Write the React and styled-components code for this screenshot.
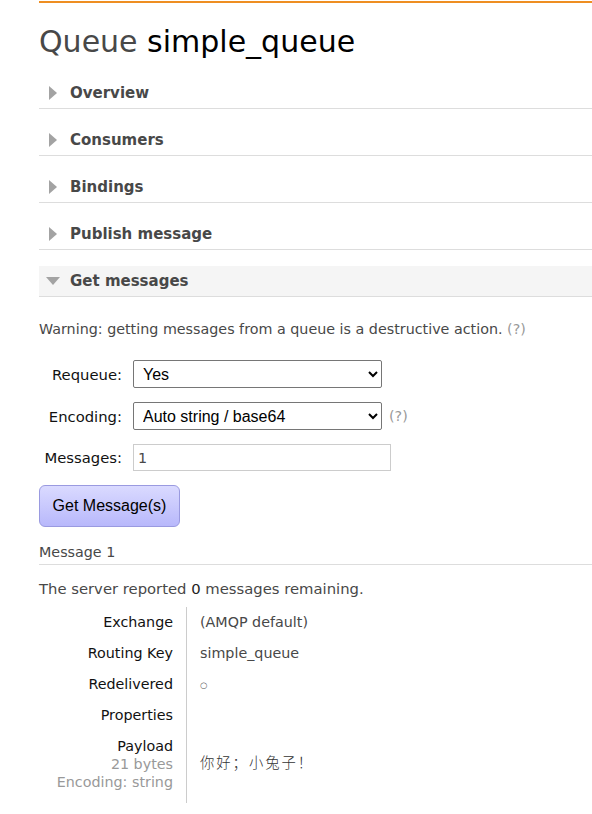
import React from 'react';
import styled, { createGlobalStyle } from 'styled-components';

const GlobalStyle = createGlobalStyle`
    body {
        margin: 0;
        background: #fff;
        font-family: "DejaVu Sans", Verdana, sans-serif;
        font-size: 14.3px;
        color: #484848;
    }
`;

const Main = styled.div`
    margin: 1px 0 0 39px;
    border-top: 2px solid #ee8e22;
`;

const Title = styled.h1`
    margin: 21px 0 0;
    font-size: 30px;
    line-height: 36px;
    font-weight: normal;
    color: #484848;
`;

const Name = styled.span`
    color: #000;
`;

const Section = styled.div`
    margin-top: ${(p) => (p.$first ? '18px' : '16px')};
`;

const SectionHeader = styled.div`
    display: flex;
    align-items: center;
    gap: 9px;
    height: 30px;
    padding-left: 6px;
    border-bottom: 1px solid #ddd;
    background: ${(p) => (p.$open ? '#f5f5f5' : 'transparent')};
    font-size: 15px;
    font-weight: bold;
    color: #484848;
`;

const Arrow = styled.span`
    display: flex;
    justify-content: center;
    align-items: center;
    width: 16px;
`;

const Body = styled.div`
    padding-top: 22px;
`;

const Warning = styled.p`
    margin: 0;
    line-height: 20px;
`;

const Help = styled.span`
    color: #999;
`;

const Form = styled.div`
    display: grid;
    grid-template-columns: 83px auto;
    column-gap: 11px;
    row-gap: 14px;
    margin-top: 21px;
    align-items: center;
    justify-content: start;
`;

const Label = styled.label`
    text-align: right;
    font-size: 14.8px;
    color: #111;
`;

const Field = styled.div`
    display: flex;
    align-items: center;
    gap: 7px;
`;

const Select = styled.select`
    width: 249px;
    height: 28px;
    padding: 0 5px;
    font-family: "Liberation Sans", Arial, sans-serif;
    font-size: 16px;
    color: #000;
    background: #fff;
    border: 1px solid #767676;
    border-radius: 2px;
`;

const Input = styled.input`
    width: 258px;
    height: 27px;
    box-sizing: border-box;
    padding: 0 4px;
    font-family: "DejaVu Sans", Verdana, sans-serif;
    font-size: 14.3px;
    color: #484848;
    border: 1px solid #ccc;
    outline: none;
`;

const Button = styled.button`
    margin-top: 14px;
    width: 141px;
    height: 42px;
    font-family: "Liberation Sans", Arial, sans-serif;
    font-size: 16px;
    color: #000;
    background: linear-gradient(#dadaff, #b8b8fb);
    border: 1px solid #9a9ae0;
    border-radius: 6px;
    cursor: pointer;
`;

const MessageTitle = styled.h3`
    margin: 15px 0 0;
    padding-bottom: 2px;
    font-size: 14.3px;
    font-weight: normal;
    line-height: 20px;
    border-bottom: 1px solid #ddd;
`;

const Note = styled.p`
    margin: 14px 0 0;
    font-size: 14.8px;
    line-height: 20px;
`;

const Count = styled.span`
    color: #222;
`;

const Props = styled.div`
    display: grid;
    grid-template-columns: 148px 1fr;
    margin-top: 8px;
`;

const Key = styled.div`
    padding: ${(p) => (p.$tall ? '6px 13px 12px 0' : '6px 13px 7px 0')};
    border-right: 1px solid #ccc;
    text-align: right;
    line-height: 18px;
    color: #111;
`;

const Sub = styled.div`
    color: #999;
`;

const Value = styled.div`
    display: flex;
    align-items: ${(p) => (p.$center ? 'center' : 'flex-start')};
    padding: 6px 0 7px 13px;
    line-height: 18px;
    color: #484848;
`;

const Payload = styled.span`
    font-family: "Noto Sans CJK SC", sans-serif;
    font-size: 14.3px;
    font-weight: 300;
    letter-spacing: 2px;
    color: #333;
    margin-top: -10px;
`;

const Bullet = styled.span`
    display: block;
    height: 18px;
    font-size: 8.5px;
    line-height: 20px;
    color: #555;
`;

const RightTri = () => (
    <svg width="8" height="14" viewBox="0 0 8 14">
        <polygon points="0,0 8,7 0,14" fill="#a3a3a3" />
    </svg>
);

const DownTri = () => (
    <svg width="14" height="8" viewBox="0 0 14 8">
        <polygon points="0,0 14,0 7,8" fill="#a3a3a3" />
    </svg>
);

const closed = ['Overview', 'Consumers', 'Bindings', 'Publish message'];

const rows = [
    ['Exchange', '(AMQP default)'],
    ['Routing Key', 'simple_queue'],
];

export default function App() {
    return (
        <>
            <GlobalStyle />
            <Main>
                <Title>Queue <Name>simple_queue</Name></Title>
                {closed.map((name, i) => (
                    <Section key={name} $first={i === 0}>
                        <SectionHeader>
                            <Arrow><RightTri /></Arrow>
                            {name}
                        </SectionHeader>
                    </Section>
                ))}
                <Section>
                    <SectionHeader $open>
                        <Arrow><DownTri /></Arrow>
                        Get messages
                    </SectionHeader>
                    <Body>
                        <Warning>
                            Warning: getting messages from a queue is a destructive action. <Help>(?)</Help>
                        </Warning>
                        <Form>
                            <Label>Requeue:</Label>
                            <Field>
                                <Select defaultValue="yes">
                                    <option value="yes">Yes</option>
                                    <option value="no">No</option>
                                </Select>
                            </Field>
                            <Label>Encoding:</Label>
                            <Field>
                                <Select defaultValue="auto">
                                    <option value="auto">Auto string / base64</option>
                                    <option value="base64">base64</option>
                                </Select>
                                <Help>(?)</Help>
                            </Field>
                            <Label>Messages:</Label>
                            <Field>
                                <Input defaultValue="1" />
                            </Field>
                        </Form>
                        <Button>Get Message(s)</Button>
                        <MessageTitle>Message 1</MessageTitle>
                        <Note>The server reported <Count>0</Count> messages remaining.</Note>
                        <Props>
                            {rows.map(([k, v]) => (
                                <React.Fragment key={k}>
                                    <Key>{k}</Key>
                                    <Value>{v}</Value>
                                </React.Fragment>
                            ))}
                            <Key>Redelivered</Key>
                            <Value><Bullet>○</Bullet></Value>
                            <Key>Properties</Key>
                            <Value />
                            <Key $tall>
                                Payload
                                <Sub>21 bytes</Sub>
                                <Sub>Encoding: string</Sub>
                            </Key>
                            <Value $center><Payload>你好；小兔子！</Payload></Value>
                        </Props>
                    </Body>
                </Section>
            </Main>
        </>
    );
}
